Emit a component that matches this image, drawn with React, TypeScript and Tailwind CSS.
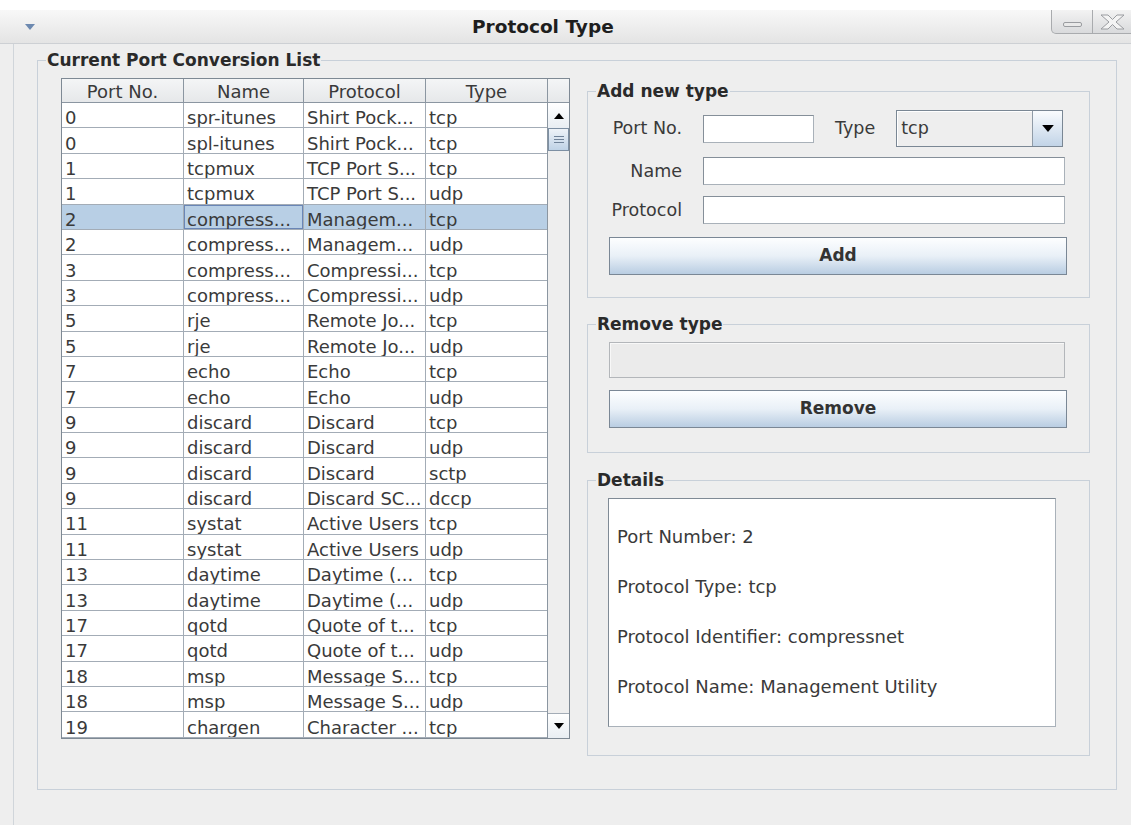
import React from "react";

type PortRow = {
  port: string;
  name: string;
  protocol: string;
  type: string;
};

const ROWS: PortRow[] = [
  { port: "0", name: "spr-itunes", protocol: "Shirt Pock...", type: "tcp" },
  { port: "0", name: "spl-itunes", protocol: "Shirt Pock...", type: "tcp" },
  { port: "1", name: "tcpmux", protocol: "TCP Port S...", type: "tcp" },
  { port: "1", name: "tcpmux", protocol: "TCP Port S...", type: "udp" },
  { port: "2", name: "compress...", protocol: "Managem...", type: "tcp" },
  { port: "2", name: "compress...", protocol: "Managem...", type: "udp" },
  { port: "3", name: "compress...", protocol: "Compressi...", type: "tcp" },
  { port: "3", name: "compress...", protocol: "Compressi...", type: "udp" },
  { port: "5", name: "rje", protocol: "Remote Jo...", type: "tcp" },
  { port: "5", name: "rje", protocol: "Remote Jo...", type: "udp" },
  { port: "7", name: "echo", protocol: "Echo", type: "tcp" },
  { port: "7", name: "echo", protocol: "Echo", type: "udp" },
  { port: "9", name: "discard", protocol: "Discard", type: "tcp" },
  { port: "9", name: "discard", protocol: "Discard", type: "udp" },
  { port: "9", name: "discard", protocol: "Discard", type: "sctp" },
  { port: "9", name: "discard", protocol: "Discard SC...", type: "dccp" },
  { port: "11", name: "systat", protocol: "Active Users", type: "tcp" },
  { port: "11", name: "systat", protocol: "Active Users", type: "udp" },
  { port: "13", name: "daytime", protocol: "Daytime (...", type: "tcp" },
  { port: "13", name: "daytime", protocol: "Daytime (...", type: "udp" },
  { port: "17", name: "qotd", protocol: "Quote of t...", type: "tcp" },
  { port: "17", name: "qotd", protocol: "Quote of t...", type: "udp" },
  { port: "18", name: "msp", protocol: "Message S...", type: "tcp" },
  { port: "18", name: "msp", protocol: "Message S...", type: "udp" },
  { port: "19", name: "chargen", protocol: "Character ...", type: "tcp" },
];

const SELECTED_ROW = 4;

// column widths include the grid line on the right
const COL_WIDTHS = ["w-[122px]", "w-[120px]", "w-[122px]", "w-[121px]"];
const HEADERS = ["Port No.", "Name", "Protocol", "Type"];

function Arrow({ up = false, className = "" }: { up?: boolean; className?: string }) {
  return (
    <svg viewBox="0 0 10 6" className={className}>
      <path d={up ? "M0 6h10L5 0z" : "M0 0h10L5 6z"} fill="currentColor" />
    </svg>
  );
}

function Group({
  title,
  className = "",
  children,
}: {
  title: string;
  className?: string;
  children: React.ReactNode;
}) {
  return (
    <fieldset className={`border border-[#c8d0d9] ${className}`}>
      <legend className="ml-[8px] px-[1px] text-[17px] font-bold leading-[20px] text-[#2a2a2a]">
        {title}
      </legend>
      {children}
    </fieldset>
  );
}

function TitleBar() {
  return (
    <div className="flex h-[34px] items-start border-b border-[#cdd0d4] bg-gradient-to-b from-[#f8f8f8] to-[#e4e4e4]">
      <div className="w-[472px] pl-[25px] pt-[14px]">
        <Arrow className="h-[6px] w-[10px] text-[#6d89b0]" />
      </div>
      <div className="pt-[5px] text-[18.5px] font-bold leading-[24px] text-[#1e1e1e]">Protocol Type</div>
      <div className="ml-auto flex h-[24px]">
        <div className="flex w-[42px] items-end justify-center rounded-bl-[5px] border border-t-0 border-[#a9abae] bg-gradient-to-b from-[#f3f3f3] to-[#d9dadc] pb-[6px]">
          <svg viewBox="0 0 19 5" className="h-[5px] w-[19px]">
            <rect x="0.5" y="0.5" width="18" height="4" rx="1.5" fill="#e9e9e9" stroke="#9a9ca0" />
          </svg>
        </div>
        <div className="flex w-[38px] items-center justify-center border-b border-[#a9abae] bg-gradient-to-b from-[#f3f3f3] to-[#d9dadc]">
          <svg viewBox="0 0 25 16" className="h-[16px] w-[25px]">
            <path
              d="M1 1h7l4.5 4.5L17 1h7l-8 7 8 7h-7l-4.5-4.5L8 15H1l8-7z"
              fill="#f4f4f4"
              stroke="#9a9ca0"
              strokeLinejoin="round"
            />
          </svg>
        </div>
      </div>
    </div>
  );
}

function PortTable() {
  return (
    <div className="flex w-[509px] border border-[#7e8994] bg-white text-[18px] text-[#3a3a3a]">
      <div className="flex flex-col">
        <div className="flex h-[24px]">
          {HEADERS.map((h, i) => (
            <div
              key={h}
              className={`${COL_WIDTHS[i]} flex items-center justify-center border-b border-[#8b96a1] bg-gradient-to-b from-[#f4f5f6] to-[#e6e8ea] pt-[2px] ${
                i < 3 ? "border-r" : ""
              }`}
            >
              {h}
            </div>
          ))}
        </div>
        {ROWS.map((r, idx) => {
          const selected = idx === SELECTED_ROW;
          const cells = [r.port, r.name, r.protocol, r.type];
          return (
            <div key={idx} className={`flex h-[25.4px] ${selected ? "bg-[#b8cfe5]" : ""}`}>
              {cells.map((c, i) => (
                <div
                  key={i}
                  className={`${COL_WIDTHS[i]} flex items-center overflow-hidden whitespace-nowrap border-b border-[#a3acb6] pl-[3px] pt-[5px] ${
                    i < 3 ? "border-r" : ""
                  } ${selected && i === 1 ? "shadow-[inset_0_0_0_1px_#6a86b6]" : ""}`}
                >
                  {c}
                </div>
              ))}
            </div>
          );
        })}
      </div>

      {/* vertical scrollbar */}
      <div className="flex w-[22px] flex-col border-l border-[#8b96a1] bg-[#eeeeee]">
        <div className="h-[24px] border-b border-[#8b96a1] bg-gradient-to-b from-[#f4f5f6] to-[#e6e8ea]" />
        <div className="flex h-[25px] items-center justify-center bg-gradient-to-b from-[#ffffff] to-[#e9eef3]">
          <Arrow up className="h-[6px] w-[10px] text-black" />
        </div>
        <div className="flex h-[23px] flex-col items-center justify-center gap-[2px] border border-[#7d8fa3] bg-gradient-to-b from-[#eef3f8] to-[#bfd2e6]">
          <div className="h-px w-[10px] bg-[#6f8298]" />
          <div className="h-px w-[10px] bg-[#6f8298]" />
          <div className="h-px w-[10px] bg-[#6f8298]" />
        </div>
        <div className="flex-1" />
        <div className="flex h-[25px] items-center justify-center border-t border-[#a3acb6] bg-gradient-to-b from-[#ffffff] to-[#e9eef3]">
          <Arrow className="h-[6px] w-[10px] text-black" />
        </div>
      </div>
    </div>
  );
}

const fieldClass = "h-[28px] border border-[#858f99] border-b-[#a9b1b9] border-r-[#a9b1b9] bg-white";
const buttonClass =
  "h-[38px] w-[458px] border border-[#7a8795] bg-gradient-to-b from-[#fdfeff] via-[#e9f0f7] to-[#b9cde2] text-[17px] font-bold text-[#333]";

function AddTypePanel() {
  return (
    <Group title="Add new type" className="w-[503px]">
      <div className="pl-[21px] pt-[9px] pb-[22px] text-[17.5px] text-[#3a3a3a]">
        <div className="flex h-[37px] items-center">
          <span className="w-[73px] text-right">Port No.</span>
          <input className={`ml-[21px] w-[111px] ${fieldClass}`} />
          <span className="ml-[21px]">Type</span>
          <div className="ml-[21px] flex h-[37px] w-[167px] border border-[#7a8794] bg-[#eeeeee]">
            <div className="flex flex-1 items-center border-r border-[#8f9ba7] pl-[4px] shadow-[inset_1px_1px_0_#ffffff]">
              tcp
            </div>
            <div className="flex w-[29px] items-center justify-center bg-gradient-to-b from-[#fafcfe] to-[#c2d4e7]">
              <Arrow className="h-[7px] w-[12px] text-black" />
            </div>
          </div>
        </div>
        <div className="mt-[10px] flex items-center">
          <span className="w-[73px] text-right">Name</span>
          <input className={`ml-[21px] w-[362px] ${fieldClass}`} />
        </div>
        <div className="mt-[11px] flex items-center">
          <span className="w-[73px] text-right">Protocol</span>
          <input className={`ml-[21px] w-[362px] ${fieldClass}`} />
        </div>
        <button className={`mt-[13px] ${buttonClass}`}>Add</button>
      </div>
    </Group>
  );
}

function RemoveTypePanel() {
  return (
    <Group title="Remove type" className="mt-[16px] w-[503px]">
      <div className="pl-[21px] pt-[8px] pb-[24px]">
        <div className="h-[36px] w-[456px] border border-[#b3b6ba] bg-[#ebebeb] shadow-[inset_1px_1px_0_#f8f8f8]" />
        <button className={`mt-[12px] ${buttonClass}`}>Remove</button>
      </div>
    </Group>
  );
}

function DetailsPanel() {
  return (
    <Group title="Details" className="mt-[17px] w-[503px]">
      <div className="pl-[20px] pt-[8px] pb-[28px]">
        <div className="flex h-[229px] w-[448px] flex-col gap-[30px] border border-[#7f8a95] border-b-[#a9b1b9] border-r-[#a9b1b9] bg-white pl-[8px] pt-[28px] text-[18px] leading-[20px] text-[#3a3a3a]">
          <p>Port Number: 2</p>
          <p>Protocol Type: tcp</p>
          <p>Protocol Identifier: compressnet</p>
          <p>Protocol Name: Management Utility</p>
        </div>
      </div>
    </Group>
  );
}

export default function App() {
  return (
    <div className="flex h-[825px] w-[1131px] flex-col overflow-hidden bg-[#eeeeee] font-['DejaVu_Sans',sans-serif] text-[#333]">
      <div className="h-[10px] bg-white" />
      <TitleBar />

      <div className="flex-1 pl-[13px]">
        <div className="h-full border-l border-[#d0d5da] pl-[23px] pt-[6px]">
          <Group title="Current Port Conversion List" className="w-[1080px]">
            <div className="flex items-start pl-[23px] pt-[8px] pb-[33px]">
              <PortTable />
              <div className="ml-[17px] mt-[3px] flex flex-col">
                <AddTypePanel />
                <RemoveTypePanel />
                <DetailsPanel />
              </div>
            </div>
          </Group>
        </div>
      </div>
    </div>
  );
}
